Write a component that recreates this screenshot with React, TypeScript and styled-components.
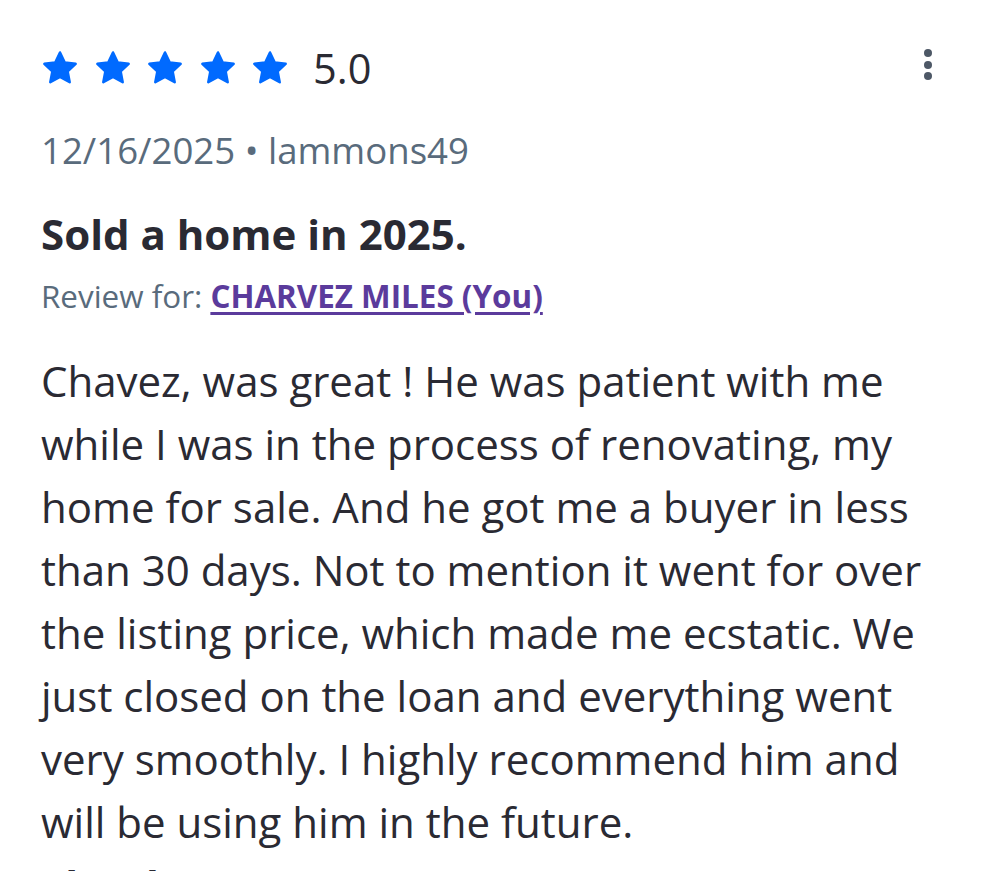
import styled, { createGlobalStyle } from 'styled-components';

const GlobalStyle = createGlobalStyle`
  html, body {
    margin: 0;
    padding: 0;
    background: #ffffff;
  }
  body {
    font-family: 'Open Sans', 'Noto Sans', sans-serif;
    color: #2a2a33;
  }
`;

const review = {
  rating: 5,
  date: '12/16/2025',
  author: 'lammons49',
  title: 'Sold a home in 2025.',
  agent: 'CHARVEZ MILES (You)',
  body:
    'Chavez, was great ! He was patient with me while I was in the process of renovating, my home for sale. And he got me a buyer in less than 30 days. Not to mention it went for over the listing price, which made me ecstatic. We just closed on the loan and everything went very smoothly. I highly recommend him and will be using him in the future.',
};

const Star = () => (
  <svg width="38" height="36" viewBox="0 0 24 23" aria-hidden>
    <path
      d="M12 1.6l3.05 6.4 6.95.85-5.1 4.85 1.3 6.9L12 17.2l-6.2 3.4 1.3-6.9L2 8.85l6.95-.85z"
      fill="#006aff"
      stroke="#006aff"
      strokeWidth="1.6"
      strokeLinejoin="round"
    />
  </svg>
);

const App = () => {
  return (
    <Card>
      <GlobalStyle />
      <Header>
        <Rating>
          <Stars>
            {Array.from({ length: review.rating }).map((_, i) => (
              <Star key={`star-${i}`} />
            ))}
          </Stars>
          <Score>{review.rating.toFixed(1)}</Score>
        </Rating>
        <MenuButton aria-label="More options">
          <Dot />
          <Dot />
          <Dot />
        </MenuButton>
      </Header>
      <Meta>
        {review.date} • {review.author}
      </Meta>
      <Title>{review.title}</Title>
      <ReviewFor>
        Review for: <AgentLink href="#">{review.agent}</AgentLink>
      </ReviewFor>
      <Body>{review.body}</Body>
      <Response>Thanks</Response>
    </Card>
  );
};

const Card = styled.div`
  padding: 40px 53px 0 41px;
  display: flex;
  flex-direction: column;
`;

const Header = styled.div`
  display: flex;
  align-items: center;
  justify-content: space-between;
  height: 56px;
`;

const Rating = styled.div`
  display: flex;
  align-items: center;
  gap: 24px;
`;

const Stars = styled.div`
  display: flex;
  align-items: center;
  gap: 14.5px;
`;

const Score = styled.span`
  font-size: 41.5px;
  line-height: 56px;
  color: #2a2a33;
`;

const MenuButton = styled.button`
  align-self: flex-start;
  margin-top: 9px;
  border: none;
  background: none;
  padding: 0;
  display: flex;
  flex-direction: column;
  gap: 3.5px;
  cursor: pointer;
`;

const Dot = styled.span`
  width: 8px;
  height: 8px;
  border-radius: 50%;
  background: #4d5866;
`;

const Meta = styled.div`
  margin-top: 29px;
  font-size: 36.6px;
  line-height: 50px;
  color: #596b7c;
`;

const Title = styled.h3`
  margin: 31px 0 0;
  font-size: 42px;
  line-height: 56px;
  font-weight: 700;
  color: #2a2a33;
`;

const ReviewFor = styled.div`
  margin-top: 13px;
  font-size: 31.4px;
  line-height: 42px;
  color: #596b7c;
`;

const AgentLink = styled.a`
  color: #5b3b9c;
  font-weight: 700;
  text-decoration: underline;
  text-underline-offset: 4px;
`;

const Body = styled.p`
  margin: 32px 0 0;
  font-size: 42px;
  line-height: 63px;
  color: #2a2a33;
`;

const Response = styled.div`
  margin-top: 4px;
  font-size: 42px;
  line-height: 56px;
  font-weight: 700;
  color: #2a2a33;
`;

export default App;
